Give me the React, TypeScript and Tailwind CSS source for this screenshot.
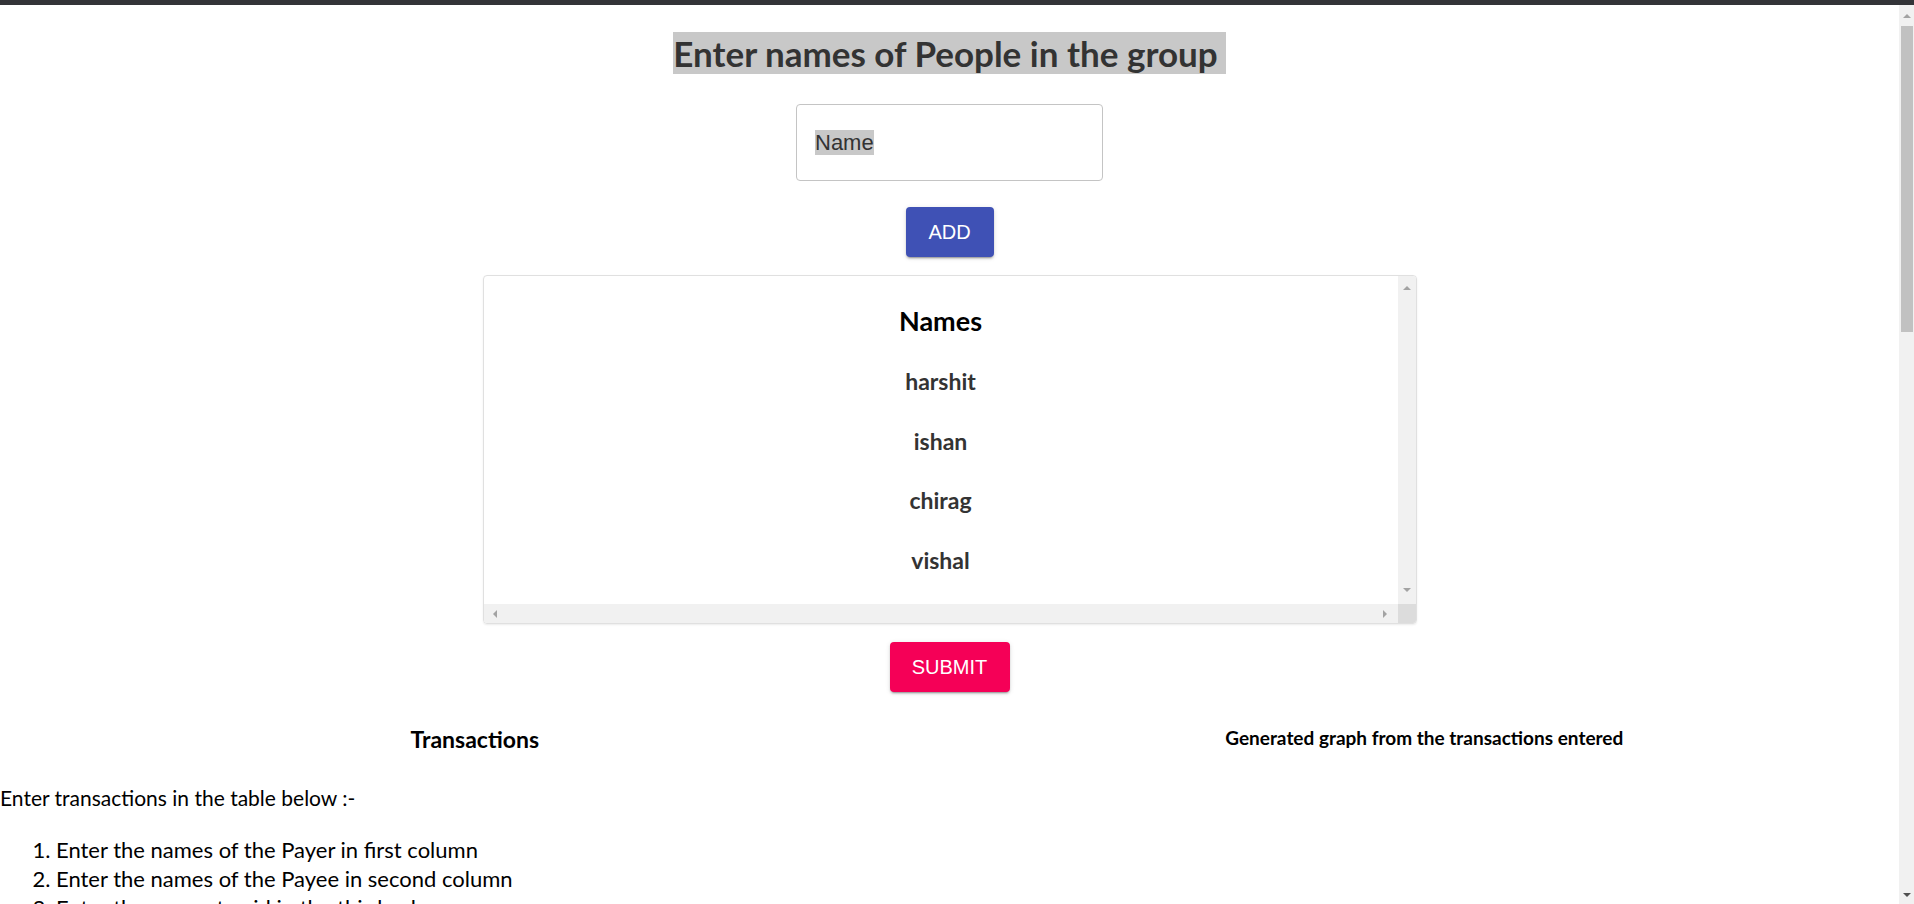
import React from "react";

const Tri = ({ dir, color = "#a3a3a3" }: { dir: "up" | "down" | "left" | "right"; color?: string }) => {
  const pts: Record<string, string> = {
    up: "0,4 4,0 8,4",
    down: "0,0 8,0 4,4",
    left: "4,0 4,8 0,4",
    right: "0,0 0,8 4,4",
  };
  const vertical = dir === "up" || dir === "down";
  return (
    <svg width={vertical ? 8 : 4} height={vertical ? 4 : 8} viewBox={vertical ? "0 0 8 4" : "0 0 4 8"}>
      <polygon points={pts[dir]} fill={color} />
    </svg>
  );
};

const names = ["harshit", "ishan", "chirag", "vishal"];

const btnShadow =
  "shadow-[0px_3px_1px_-2px_rgba(0,0,0,0.2),0px_2px_2px_0px_rgba(0,0,0,0.14),0px_1px_5px_0px_rgba(0,0,0,0.12)]";

export default function App() {
  return (
    <div className="w-[1914px] h-[904px] overflow-hidden flex flex-col bg-white font-[Lato,sans-serif]">
      <div className="h-[5px] shrink-0 bg-[#333438]" />
      <div className="flex flex-1 min-h-0">
        <main className="flex-1 min-w-0 overflow-hidden flex flex-col items-center">
          <h1 className="shrink-0 mt-[26px] text-[35px] leading-[44px] font-bold text-[#333]">
            <span className="bg-[#c8c8c8] pr-[8px]">Enter names of People in the group</span>
          </h1>

          <div className="shrink-0 mt-[29px] w-[307px] h-[77px] border border-[#c4c4c4] rounded-[4px] flex items-center px-[18px]">
            <span className="bg-[#c8c8c8] text-[#333] text-[22px] leading-[25px] font-['Liberation_Sans',Arial,sans-serif]">
              Name
            </span>
          </div>

          <button
            className={`shrink-0 mt-[26px] h-[50px] w-[88px] rounded-[4px] bg-[#3f51b5] text-white text-[20px] font-['Liberation_Sans',Arial,sans-serif] ${btnShadow}`}
          >
            ADD
          </button>

          <div className="shrink-0 mt-[18px] w-[934px] h-[349px] border border-[#e0e0e0] rounded-[4px] flex flex-col overflow-hidden shadow-[0px_1px_2px_0px_rgba(0,0,0,0.08)]">
            <div className="flex flex-1 min-h-0">
              <div className="flex-1 flex flex-col items-center pt-[29px]">
                <div className="text-[27px] leading-[32px] font-bold text-black">Names</div>
                <div className="mt-[30px] flex flex-col items-center gap-[31.5px]">
                  {names.map((n) => (
                    <div key={n} className="text-[23px] leading-[28px] font-bold text-[#333]">
                      {n}
                    </div>
                  ))}
                </div>
              </div>
              <div className="w-[18px] bg-[#f1f1f1] flex flex-col justify-between items-center pt-[10px] pb-[12px]">
                <Tri dir="up" />
                <Tri dir="down" />
              </div>
            </div>
            <div className="h-[19px] flex shrink-0">
              <div className="flex-1 bg-[#f1f1f1] flex justify-between items-center pl-[9px] pr-[11px]">
                <Tri dir="left" />
                <Tri dir="right" />
              </div>
              <div className="w-[18px] bg-[#dcdcdc]" />
            </div>
          </div>

          <button
            className={`shrink-0 mt-[18px] h-[50px] w-[120px] rounded-[4px] bg-[#f50057] text-white text-[20px] font-['Liberation_Sans',Arial,sans-serif] ${btnShadow}`}
          >
            SUBMIT
          </button>

          <div className="shrink-0 w-full grid grid-cols-2 mt-[32px]">
            <div className="flex flex-col">
              <h3 className="text-center text-[23px] leading-[30px] font-bold text-black">Transactions</h3>
              <p className="mt-[29px] text-[21px] leading-[30px] text-black">Enter transactions in the table below :-</p>
              <ol className="mt-[22px] list-decimal pl-[56px] text-[22px] leading-[29px] text-black">
                <li>Enter the names of the Payer in first column</li>
                <li>Enter the names of the Payee in second column</li>
                <li>Enter the amount paid in the third column</li>
              </ol>
            </div>
            <div className="flex flex-col">
              <h4 className="text-center text-[19px] leading-[28px] font-bold text-black">
                Generated graph from the transactions entered
              </h4>
            </div>
          </div>
        </main>

        <div className="w-[15px] shrink-0 bg-[#f1f1f1] flex flex-col items-center">
          <div className="h-[21px] flex items-center justify-center shrink-0">
            <Tri dir="up" />
          </div>
          <div className="self-stretch ml-[2px] mr-[1px] h-[306px] bg-[#c1c1c1]" />
          <div className="flex-1" />
          <div className="h-[18px] flex items-center justify-center shrink-0">
            <Tri dir="down" color="#505050" />
          </div>
        </div>
      </div>
    </div>
  );
}
